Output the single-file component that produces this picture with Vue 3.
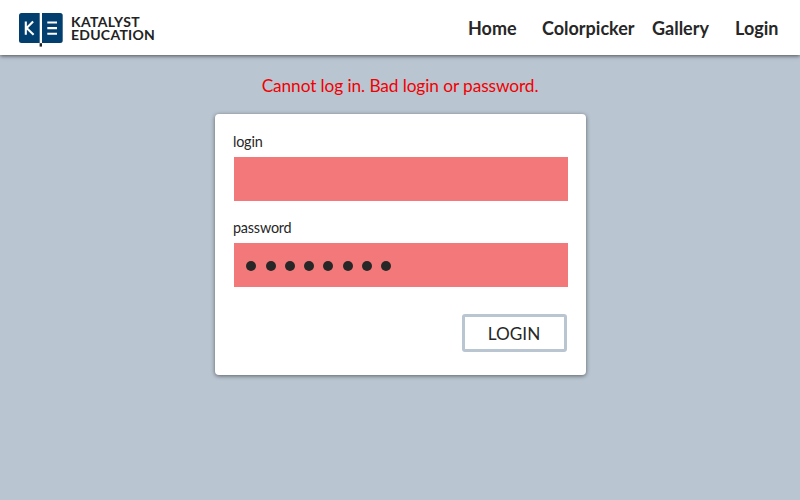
<script setup>
import { ref } from 'vue'

const links = ['Home', 'Colorpicker', 'Gallery', 'Login']
const passwordLength = ref(8)
</script>

<template>
  <div class="page">
    <header class="topbar">
      <div class="brand">
        <svg class="logo" width="44" height="38" viewBox="0 0 44 38" aria-hidden="true">
          <path d="M2.5 1H20.7V31H2.5Q0 31 0 28.5V3.5Q0 1 2.5 1Z" fill="#023f6e" />
          <path d="M23 1H41.2Q43.7 1 43.7 3.5V28.5Q43.7 31 41.2 31H23Z" fill="#023f6e" />
          <rect x="20.6" y="31.2" width="2.4" height="3.4" fill="#232323" />
          <path d="M6.8 9.5V22.8M14.1 9.5L7.6 16.1L14.6 22.8" fill="none" stroke="#fff" stroke-width="2.1" />
          <path d="M28.3 10.5H38M28.3 16.1H38M28.3 21.8H38" fill="none" stroke="#fff" stroke-width="2.1" />
        </svg>
        <div class="wordmark">
          <div class="katalyst">KATALYST</div>
          <div class="education">EDUCATION</div>
        </div>
      </div>
      <nav class="nav">
        <a v-for="link in links" :key="link">{{ link }}</a>
      </nav>
    </header>
    <main class="content">
      <p class="error">Cannot log in. Bad login or password.</p>
      <form class="card" @submit.prevent>
        <label class="label">login</label>
        <div class="field"></div>
        <label class="label second">password</label>
        <div class="field">
          <span v-for="n in passwordLength" :key="n" class="dot"></span>
        </div>
        <button class="submit">LOGIN</button>
      </form>
    </main>
  </div>
</template>

<style>
body {
  background: #b9c5d1;
}
</style>

<style scoped>
.page {
  height: 500px;
  overflow: hidden;
  background: #b9c5d1;
  color: #272727;
  font-family: Lato, sans-serif;
}
.topbar {
  box-sizing: border-box;
  height: 55px;
  display: flex;
  justify-content: space-between;
  padding: 12px 0 0 19px;
  background: #fff;
  box-shadow: 0 1px 4px rgba(0, 0, 0, 0.6);
}
.brand {
  display: flex;
  gap: 8px;
}
.logo {
  display: block;
}
.wordmark {
  padding-top: 4px;
  font-size: 14px;
  font-weight: 700;
  line-height: 12.5px;
  color: #232323;
}
.katalyst {
  letter-spacing: 0.34px;
}
.education {
  letter-spacing: 0.26px;
}
.nav {
  display: grid;
  grid-template-columns: 74px 110px 83px 65px;
  font-size: 18px;
  font-weight: 700;
  line-height: 32px;
}
.content {
  display: flex;
  flex-direction: column;
  align-items: center;
}
.error {
  margin: 19px 0 16px;
  font-size: 17.28px;
  line-height: 24px;
  letter-spacing: -0.09px;
  color: #f20000;
}
.card {
  box-sizing: border-box;
  width: 371px;
  height: 261px;
  display: flex;
  flex-direction: column;
  margin-left: 1px;
  padding: 17px 18px 0 19px;
  border-radius: 4px;
  background: #fff;
  box-shadow: 0 1px 4px rgba(0, 0, 0, 0.5);
}
.label {
  margin: 0 0 4px -1px;
  font-size: 14.4px;
  line-height: 22px;
  letter-spacing: -0.2px;
}
.second {
  margin-top: 16px;
}
.field {
  height: 44px;
  display: flex;
  align-items: center;
  gap: 9.3px;
  box-sizing: border-box;
  padding: 1px 0 0 12.3px;
  background: #f27879;
}
.dot {
  width: 10px;
  height: 10px;
  border-radius: 50%;
  background: #272727;
}
.submit {
  align-self: flex-end;
  box-sizing: border-box;
  width: 105px;
  height: 38px;
  margin: 27px 1px 0 0;
  padding: 1px 1px 0 0;
  border: 3px solid #b9c5d1;
  border-radius: 3px;
  background: #fff;
  color: #272727;
  font: 17.2px Lato, sans-serif;
}
</style>
